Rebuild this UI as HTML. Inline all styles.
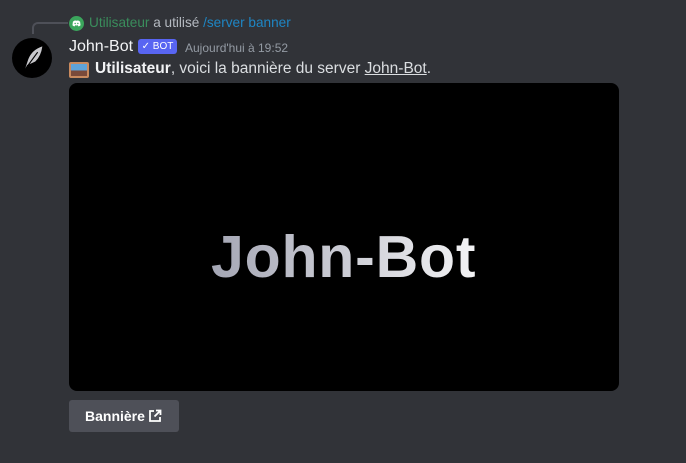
<!DOCTYPE html>
<html><head><meta charset="utf-8"><style>
body{margin:0;width:686px;height:463px;background:#313338;font-family:"Liberation Sans",sans-serif;position:relative;overflow:hidden}
.a{position:absolute;white-space:nowrap}
</style></head><body>
<div class="a" style="left:32px;top:22px;width:34px;height:10px;border-left:2px solid #4e5058;border-top:2px solid #4e5058;border-top-left-radius:6px"></div>
<div class="a" style="left:69px;top:16px;width:15px;height:15px;border-radius:50%;background:#3ba55c"></div>
<svg class="a" style="left:72px;top:19px" width="9" height="9" viewBox="0 0 10 10"><path d="M1 3Q3 1 5 2Q7 1 9 3L9.5 7Q8 8.5 7 8L6.5 7Q5 7.5 3.5 7L3 8Q2 8.5 0.5 7Z" fill="#fff"/><circle cx="3.5" cy="5" r=".8" fill="#3ba55c"/><circle cx="6.5" cy="5" r=".8" fill="#3ba55c"/></svg>
<div class="a" style="left:89px;top:15px;font-size:13.6px;color:#b5bac1"><span style="color:#3a8d5c">Utilisateur</span> a utilisé <span style="color:#1e86c4">/server banner</span></div>
<div class="a" style="left:12px;top:38px;width:40px;height:40px;border-radius:50%;background:#000"></div>
<svg class="a" style="left:20px;top:44px" width="26" height="28" viewBox="0 0 22 24"><path d="M4 22L7 13Q10 5 19 2Q18 10 13 15Q9 17 6 18Z" fill="#c8c8cc"/><path d="M4 22L15 7" stroke="#000" stroke-width="1"/></svg>
<div class="a" style="left:69px;top:38px;font-size:16px;color:#f2f3f5;font-weight:500">John-Bot</div>
<div class="a" style="left:138px;top:39px;width:39px;height:15px;border-radius:3px;background:#5865f2;color:#fff;font-size:10px;line-height:15px;text-align:center">✓ BOT</div>
<div class="a" style="left:185px;top:41px;font-size:12px;color:#949ba4">Aujourd'hui à 19:52</div>
<div class="a" style="left:69px;top:62px;width:20px;height:16px;background:#c98a5e;border-radius:2px"><div style="margin:2px;width:16px;height:12px;background:linear-gradient(#5fa3d8 55%,#7a4a3a 55%)"></div></div>
<div class="a" style="left:95px;top:60px;font-size:15.5px;color:#dbdee1"><b style="color:#f2f3f5">Utilisateur</b>, voici la bannière du server <span style="text-decoration:underline">John-Bot</span>.</div>
<div class="a" style="left:69px;top:83px;width:550px;height:308px;background:#000;border-radius:8px"></div>
<div class="a" style="left:211px;top:223px;font-size:59px;font-weight:bold;letter-spacing:0.8px;background:linear-gradient(90deg,#a4a6b4,#f3f3f5);-webkit-background-clip:text;background-clip:text;color:transparent">John-Bot</div>
<div class="a" style="left:69px;top:400px;width:110px;height:32px;background:#4e5058;border-radius:3px"></div>
<div class="a" style="left:85px;top:408px;font-size:14px;color:#fff;font-weight:bold">Bannière</div>
<svg class="a" style="left:148px;top:409px" width="14" height="14" viewBox="0 0 14 14" fill="none" stroke="#fff" stroke-width="1.8"><path d="M6 2H2V12H12V8M8 1.5H12.5V6M12.5 1.5L6.5 7.5"/></svg>
</body></html>
